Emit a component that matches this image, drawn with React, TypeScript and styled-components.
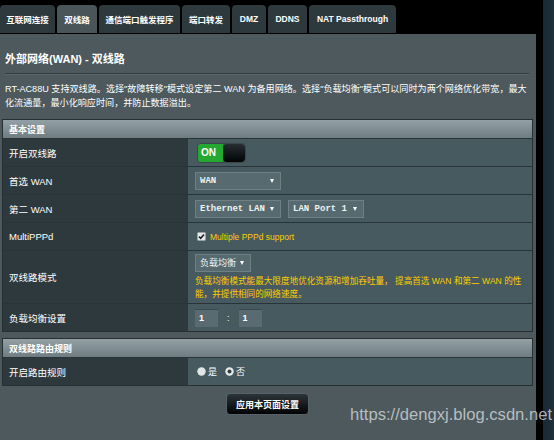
import React from "react";
import styled, { createGlobalStyle } from "styled-components";

const GlobalStyle = createGlobalStyle`
  html, body { margin: 0; padding: 0; background: #000; }
  body {
    width: 554px; height: 440px; overflow: hidden;
    font-family: "Liberation Sans", "Noto Sans CJK SC", sans-serif;
    color: #fff;
  }
  * { box-sizing: border-box; }
`;

const Frame = styled.div`
  position: relative;
  display: flex;
  width: 554px;
  height: 440px;
`;

const Main = styled.div`
  width: 536px;
  display: flex;
  flex-direction: column;
`;

const Gutter = styled.div`
  width: 7px;
  background: #000;
`;

const SideStrip = styled.div`
  flex: 1;
  background: linear-gradient(90deg, #1a2832, #1f303b);
`;

const TabBar = styled.div`
  height: 34px;
  display: flex;
  align-items: flex-end;
  gap: 2px;
  padding-bottom: 1px;
  background: #000;
`;

const Tab = styled.div<{ $active?: boolean; $w: number }>`
  width: ${(p) => p.$w}px;
  height: 28px;
  display: flex;
  align-items: center;
  justify-content: center;
  border-radius: 4px 4px 0 0;
  background: ${(p) => (p.$active ? "#4a5559" : "#2e393e")};
  color: #fff;
  font-size: 8.5px;
  font-weight: bold;
  white-space: nowrap;
`;

const Panel = styled.div`
  flex: 1;
  background: #4d595d;
  padding: 0 3px 0 2px;
  display: flex;
  flex-direction: column;
`;

const Title = styled.div`
  margin: 17px 0 0 3px;
  font-size: 11px;
  font-weight: bold;
  line-height: 16px;
`;

const Divider = styled.div`
  height: 1px;
  margin: 6px 4px 0 3px;
  background: #323d41;
  box-shadow: 0 1px 0 #5a666a;
`;

const Desc = styled.div`
  margin: 8px 0 0 3px;
  font-size: 9.1px;
  line-height: 14px;
  white-space: nowrap;
`;

const Table = styled.div<{ $mt: number }>`
  margin-top: ${(p) => p.$mt}px;
  border: 1px solid #252f34;
  display: flex;
  flex-direction: column;
`;

const Head = styled.div`
  height: 18px;
  padding-left: 6px;
  display: flex;
  align-items: center;
  background: linear-gradient(#93a1a6, #6f7d82);
  font-size: 9px;
  font-weight: bold;
  color: #fff;
`;

const Row = styled.div<{ $h?: number }>`
  display: grid;
  grid-template-columns: 185px 1fr;
  height: ${(p) => p.$h ?? 28}px;
  border-top: 1px solid #28333a;
`;

const Label = styled.div`
  background: #2e393d;
  padding-left: 6px;
  display: flex;
  align-items: center;
  font-size: 9.5px;
`;

const Value = styled.div<{ $col?: boolean }>`
  background: #475a5f;
  padding-left: 7px;
  display: flex;
  flex-direction: ${(p) => (p.$col ? "column" : "row")};
  align-items: ${(p) => (p.$col ? "flex-start" : "center")};
  justify-content: ${(p) => (p.$col ? "center" : "flex-start")};
  gap: ${(p) => (p.$col ? 3 : 7)}px;
`;

const Toggle = styled.div`
  width: 49px;
  height: 20px;
  display: flex;
  border-radius: 4px;
  border: 1px solid #3b474b;
  overflow: hidden;
  margin-left: 2px;
`;

const ToggleOn = styled.div`
  width: 25px;
  background: #25a832;
  color: #fff;
  font-size: 10px;
  font-weight: bold;
  display: flex;
  align-items: center;
  padding-left: 3px;
`;

const Knob = styled.div`
  flex: 1;
  background: linear-gradient(#262e32, #020405);
  border-radius: 4px;
`;

const Select = styled.div<{ $w: number; $mono?: boolean }>`
  width: ${(p) => p.$w}px;
  height: 18px;
  display: flex;
  align-items: center;
  justify-content: space-between;
  padding: 0 6px 0 4px;
  background: #566a6f;
  border: 1px solid #6f8085;
  color: #eef2f3;
  font-family: ${(p) =>
    p.$mono ? `"Liberation Mono", monospace` : `"Liberation Sans", "Noto Sans CJK SC", sans-serif`};
  font-size: 9px;
  font-weight: ${(p) => (p.$mono ? "bold" : "normal")};
  white-space: nowrap;
`;

const Arrow = styled.span`
  width: 0;
  height: 0;
  border-left: 2.5px solid transparent;
  border-right: 2.5px solid transparent;
  border-top: 4px solid #fff;
`;

const Warn = styled.div`
  color: #ffcc00;
  font-size: 8.6px;
  line-height: 13px;
  white-space: nowrap;
`;

const Check = styled.label`
  display: flex;
  align-items: center;
  gap: 4px;
  color: #ffcc00;
  font-size: 8.5px;
  margin-left: 2px;
`;

const NumBox = styled.div`
  width: 23px;
  height: 18px;
  background: #596b70;
  border-top: 1px solid #3b4a4f;
  color: #fff;
  font-size: 9px;
  font-weight: bold;
  display: flex;
  align-items: center;
  padding-left: 4px;
`;

const Colon = styled.span`
  font-size: 9px;
  color: #fff;
  padding: 0 2px;
`;

const RadioLabel = styled.label`
  display: flex;
  align-items: center;
  gap: 2px;
  font-size: 9px;
  color: #fff;
  margin-left: 2px;
`;

const Radios = styled.div`
  display: flex;
  gap: 6px;
  align-items: center;
`;

const Footer = styled.div`
  display: flex;
  justify-content: center;
  margin-top: 7px;
`;

const ApplyButton = styled.div`
  width: 83px;
  height: 22px;
  border-radius: 4px;
  border: 1px solid #566267;
  background: linear-gradient(#2c3539, #020304);
  color: #fff;
  font-size: 9px;
  font-weight: bold;
  display: flex;
  align-items: center;
  justify-content: center;
`;

const Watermark = styled.div`
  position: absolute;
  left: 350px;
  top: 405px;
  font-family: "Liberation Sans", sans-serif;
  font-size: 16.6px;
  color: rgba(214, 220, 223, 0.78);
  white-space: nowrap;
`;

const CheckIcon = () => (
  <svg width="9" height="9" viewBox="0 0 9 9">
    <rect x="0.5" y="0.5" width="8" height="8" rx="1" fill="#e6e9ea" stroke="#9aa4a8" />
    <path d="M2 4.6 L3.7 6.3 L7 2.4" fill="none" stroke="#1b2226" strokeWidth="1.6" />
  </svg>
);

const Radio = ({ on }: { on?: boolean }) => (
  <svg width="9" height="9" viewBox="0 0 9 9">
    {on ? (
      <>
        <circle cx="4.5" cy="4.5" r="4.2" fill="#e8ebec" />
        <circle cx="4.5" cy="4.5" r="2" fill="#333c40" />
      </>
    ) : (
      <circle cx="4.5" cy="4.5" r="4.2" fill="#e2e5e6" />
    )}
  </svg>
);

const tabs: { t: string; w: number; active?: boolean }[] = [
  { t: "互联网连接", w: 55 },
  { t: "双线路", w: 40, active: true },
  { t: "通信端口触发程序", w: 81 },
  { t: "端口转发", w: 48 },
  { t: "DMZ", w: 34 },
  { t: "DDNS", w: 39 },
  { t: "NAT Passthrough", w: 87 },
];

export default function App() {
  return (
    <>
      <GlobalStyle />
      <Frame>
        <Main>
          <TabBar>
            {tabs.map((t) => (
              <Tab key={t.t} $w={t.w} $active={t.active}>
                {t.t}
              </Tab>
            ))}
          </TabBar>
          <Panel>
            <Title>外部网络(WAN) - 双线路</Title>
            <Divider />
            <Desc>
              RT-AC88U 支持双线路。选择"故障转移"模式设定第二 WAN 为备用网络。选择"负载均衡"模式可以同时为两个网络优化带宽，最大
              <br />
              化流通量，最小化响应时间，并防止数据溢出。
            </Desc>
            <Table $mt={9}>
              <Head>基本设置</Head>
              <Row>
                <Label>开启双线路</Label>
                <Value>
                  <Toggle>
                    <ToggleOn>ON</ToggleOn>
                    <Knob />
                  </Toggle>
                </Value>
              </Row>
              <Row>
                <Label>首选 WAN</Label>
                <Value>
                  <Select $w={86} $mono>
                    WAN <Arrow />
                  </Select>
                </Value>
              </Row>
              <Row>
                <Label>第二 WAN</Label>
                <Value>
                  <Select $w={86} $mono>
                    Ethernet LAN <Arrow />
                  </Select>
                  <Select $w={76} $mono>
                    LAN Port 1 <Arrow />
                  </Select>
                </Value>
              </Row>
              <Row>
                <Label>MultiPPPd</Label>
                <Value>
                  <Check>
                    <CheckIcon />
                    Multiple PPPd support
                  </Check>
                </Value>
              </Row>
              <Row $h={53}>
                <Label>双线路模式</Label>
                <Value $col>
                  <Select $w={56}>
                    负载均衡 <Arrow />
                  </Select>
                  <Warn>
                    负载均衡模式能最大限度地优化资源和增加吞吐量， 提高首选 WAN 和第二 WAN 的性
                    <br />
                    能，并提供相同的网络速度。
                  </Warn>
                </Value>
              </Row>
              <Row>
                <Label>负载均衡设置</Label>
                <Value>
                  <NumBox>1</NumBox>
                  <Colon>:</Colon>
                  <NumBox>1</NumBox>
                </Value>
              </Row>
            </Table>
            <Table $mt={6}>
              <Head>双线路路由规则</Head>
              <Row>
                <Label>开启路由规则</Label>
                <Value>
                  <Radios>
                    <RadioLabel>
                      <Radio />是
                    </RadioLabel>
                    <RadioLabel>
                      <Radio on />否
                    </RadioLabel>
                  </Radios>
                </Value>
              </Row>
            </Table>
            <Footer>
              <ApplyButton>应用本页面设置</ApplyButton>
            </Footer>
          </Panel>
        </Main>
        <Gutter />
        <SideStrip />
        <Watermark>https://dengxj.blog.csdn.net</Watermark>
      </Frame>
    </>
  );
}
